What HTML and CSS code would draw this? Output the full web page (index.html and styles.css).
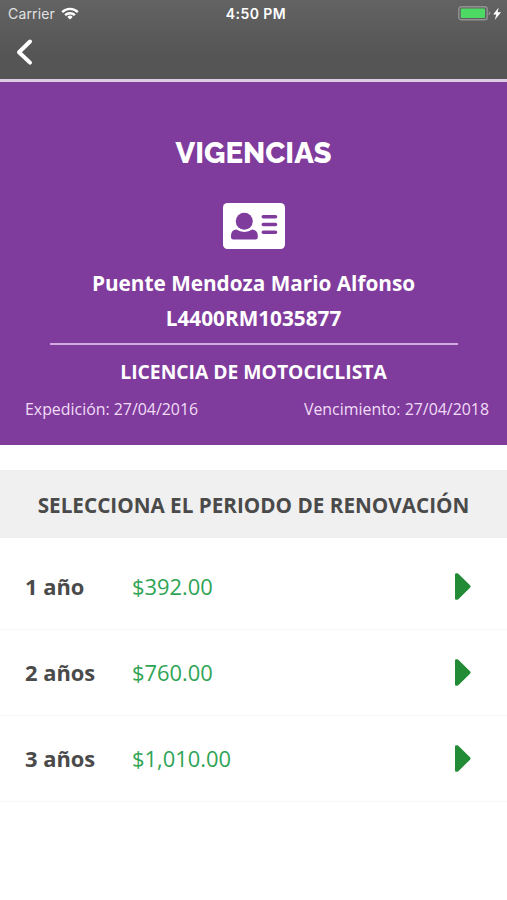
FILE: index.html
```html
<!DOCTYPE html>
<html lang="es">

<head>
  <meta charset="UTF-8">
  <meta name="viewport" content="width=device-width, initial-scale=1.0">
  <title>Vigencias</title>
  <link rel="stylesheet" href="styles.css">
</head>

<body>

  <header>
    <div class="status-bar">
      <div class="carrier">
        <span>Carrier</span>
        <svg width="18" height="13" viewBox="0 0 18 13" fill="none" stroke="#fff" stroke-width="2.4">
          <path d="M1.2 5.1a11 11 0 0 1 15.6 0" />
          <path d="M4.1 8.2a7 7 0 0 1 9.8 0" />
          <path d="M9 12.6L6.3 9.9a3.9 3.9 0 0 1 5.4 0z" fill="#fff" stroke="none" />
        </svg>
      </div>
      <span class="clock">4:50 PM</span>
      <div class="battery">
        <svg width="44" height="15" viewBox="0 0 44 15">
          <rect x="0.8" y="0.8" width="28.4" height="13" rx="2.6" fill="none" stroke="#929292" stroke-width="1.4" />
          <rect x="2.8" y="2.6" width="24.2" height="9.4" rx="1" fill="#4cd964" />
          <path d="M30.7 5.2q1.6.6 1.6 2.2t-1.6 2.2z" fill="#929292" />
          <path d="M40.6 1.5l-5.4 7h3.1l-1.5 5.6 6.2-7.8h-3.4z" fill="#fff" />
        </svg>
      </div>
    </div>
    <nav>
      <a href="#" aria-label="Regresar">
        <svg width="18" height="28" viewBox="0 0 18 28" fill="none" stroke="#fff" stroke-width="4" stroke-linecap="round" stroke-linejoin="round">
          <path d="M15 3.5L4 14.2L15 24.6" />
        </svg>
      </a>
    </nav>
  </header>

  <main>
    <section class="license">
      <h1>VIGENCIAS</h1>
      <svg class="id-card" width="62" height="46" viewBox="0 0 62 46">
        <rect width="62" height="46" rx="4.5" fill="#fff" />
        <circle cx="21.3" cy="18.3" r="8.5" fill="#803c9d" />
        <path d="M13.5 26.6q3.2 2.3 7.8 2.3t7.8-2.3q5.7.4 5.7 6.2v1.5q0 2.2-2.2 2.2H10.2q-2.2 0-2.2-2.2v-1.5q0-5.8 5.5-6.2z" fill="#803c9d" />
        <path d="M40.3 13.8h12.2M40.3 21.5h12.2M40.3 29.2h12.2" stroke="#803c9d" stroke-width="3.6" stroke-linecap="round" />
      </svg>
      <p class="name">Puente Mendoza Mario Alfonso</p>
      <p class="number">L4400RM1035877</p>
      <hr>
      <h2>LICENCIA DE MOTOCICLISTA</h2>
      <div class="dates">
        <span>Expedición: 27/04/2016</span>
        <span>Vencimiento: 27/04/2018</span>
      </div>
    </section>

    <h3>SELECCIONA EL PERIODO DE RENOVACIÓN</h3>

    <ul class="periods">
      <li>
        <span class="years">1 año</span>
        <span class="price">$392.00</span>
        <svg class="arrow" width="16" height="27" viewBox="0 0 16 27"><path d="M0 1.5Q0 .3 1.2.3h1q.8 0 1.4.6L15 12.3q1.2 1.2 0 2.4L3.6 26q-.6.7-1.4.7h-1Q0 26.7 0 25.5z" /></svg>
      </li>
      <li>
        <span class="years">2 años</span>
        <span class="price">$760.00</span>
        <svg class="arrow" width="16" height="27" viewBox="0 0 16 27"><path d="M0 1.5Q0 .3 1.2.3h1q.8 0 1.4.6L15 12.3q1.2 1.2 0 2.4L3.6 26q-.6.7-1.4.7h-1Q0 26.7 0 25.5z" /></svg>
      </li>
      <li>
        <span class="years">3 años</span>
        <span class="price">$1,010.00</span>
        <svg class="arrow" width="16" height="27" viewBox="0 0 16 27"><path d="M0 1.5Q0 .3 1.2.3h1q.8 0 1.4.6L15 12.3q1.2 1.2 0 2.4L3.6 26q-.6.7-1.4.7h-1Q0 26.7 0 25.5z" /></svg>
      </li>
    </ul>
  </main>

</body>

</html>
```
FILE: styles.css
```css
* {
  box-sizing: border-box;
}

body {
  font-family: "Open Sans", "Noto Sans", sans-serif;
  margin: 0;
  padding: 0;
  background-color: #fff;
}

svg {
  display: block;
}

header {
  height: 82px;
  background: linear-gradient(#636363, #555 70%);
  border-bottom: 3px solid #dccde4;
  color: #fff;
}

.status-bar {
  display: grid;
  grid-template-columns: 1fr auto 1fr;
  align-items: center;
  height: 27px;
  padding: 0 5px 0 8px;
  font-family: Inter, sans-serif;
  font-size: 14px;
}

.carrier {
  display: flex;
  align-items: center;
  gap: 6px;
  color: #e2e2e2;
  letter-spacing: 0.15px;
}

.clock {
  padding-left: 2px;
  font-weight: 600;
  letter-spacing: 0.45px;
}

.battery {
  justify-self: end;
}

nav {
  padding: 11px 0 0 15px;
}

nav a {
  display: block;
  width: 18px;
}

.license {
  display: flex;
  flex-direction: column;
  align-items: center;
  height: 363px;
  padding: 53px 25px 0;
  background-color: #803c9d;
  color: #fff;
}

h1 {
  margin: 0;
  font-family: Raleway, Lato, sans-serif;
  font-size: 29.3px;
  font-weight: 800;
  line-height: 36px;
}

.id-card {
  margin: 32px 0 17px;
}

.name,
.number {
  margin: 0;
  font-size: 20.75px;
  font-weight: 700;
  line-height: 35px;
}

hr {
  width: 408px;
  height: 2px;
  margin: 7px 0 9px;
  border: 0;
  background-color: #d3a9e3;
}

h2 {
  margin: 0;
  font-size: 19.3px;
  font-weight: 700;
  line-height: 36px;
}

.dates {
  display: flex;
  justify-content: space-between;
  align-self: stretch;
  margin: 8px -7px 0 0;
  font-size: 15.9px;
  line-height: 22px;
  color: #f0dcf7;
}

h3 {
  height: 68px;
  margin: 25px 0 0;
  background-color: #f0f0f0;
  color: #4a4a4a;
  font-size: 20.7px;
  font-weight: 700;
  line-height: 70px;
  text-align: center;
}

.periods {
  margin: 0;
  padding: 6px 0 0;
  list-style: none;
}

.periods li {
  display: flex;
  align-items: center;
  height: 86px;
  padding: 0 36px 0 25px;
  border-bottom: 1px solid #f7f7f7;
  font-size: 21.9px;
  line-height: 30px;
}

.years {
  width: 107px;
  color: #4a4a4a;
  font-weight: 700;
}

.price {
  color: #2fa455;
}

.arrow {
  margin-left: auto;
  fill: #228b36;
}
```
